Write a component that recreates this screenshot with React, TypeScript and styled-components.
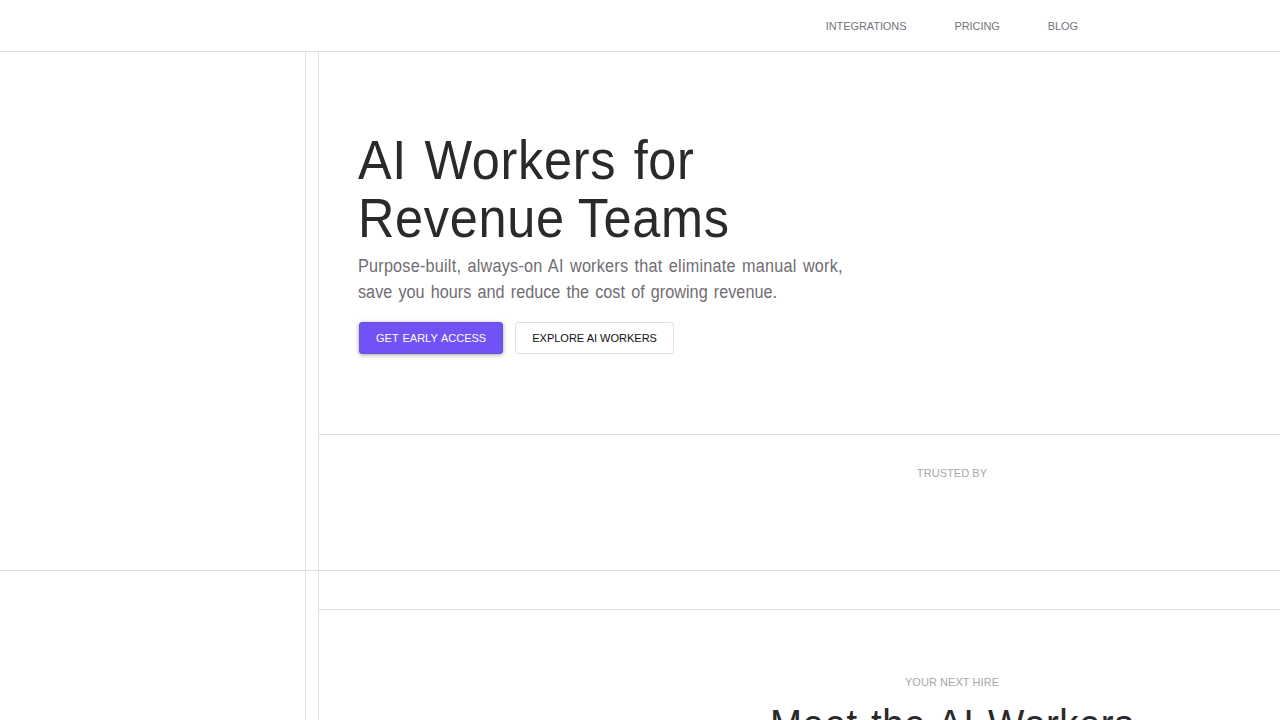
import React from "react";
import styled, { createGlobalStyle } from "styled-components";

const FONT = `"Liberation Sans", "Noto Sans CJK SC", Arial, sans-serif`;

const Global = createGlobalStyle`
  html, body { margin: 0; padding: 0; height: 720px; overflow: hidden; background: #fff; }
  body { font-family: ${FONT}; color: #262626; }
  * { box-sizing: border-box; }
`;

const Page = styled.div`
  width: 1280px;
  height: 720px;
  overflow: hidden;
  display: flex;
  flex-direction: column;
`;

const Header = styled.header`
  flex: none;
  height: 52px;
  border-bottom: 1px solid #e0e0e0;
  display: flex;
  justify-content: flex-end;
  align-items: center;
  padding: 0 202px 0 0;
  gap: 48px;
`;

const NavLink = styled.a`
  font-size: 11px;
  line-height: 16px;
  letter-spacing: -0.08px;
  color: #77727a;
  text-transform: uppercase;
`;

const Band = styled.div<{ $height: number; $ruled?: boolean }>`
  flex: none;
  height: ${(p) => p.$height}px;
  display: flex;
  border-bottom: ${(p) => (p.$ruled ? "1px solid #e0e0e0" : "none")};
`;

const Rail = styled.div`
  flex: none;
  width: 306px;
  border-right: 1px solid #e0e0e0;
`;

const Gutter = styled.div`
  flex: none;
  width: 12px;
`;

const Main = styled.main`
  flex: 1;
  min-width: 0;
  border-left: 1px solid #e0e0e0;
  display: flex;
  flex-direction: column;
`;

const Hero = styled.section`
  flex: none;
  height: 383px;
  padding: 79px 0 0 39px;
  border-bottom: 1px solid #e0e0e0;
`;

const Title = styled.h1`
  margin: 0;
  font-size: 56px;
  line-height: 58px;
  font-weight: 400;
  color: #2a2a2a;
  letter-spacing: 0.8px;
  transform: scaleX(0.9);
  transform-origin: left center;
  white-space: nowrap;
`;

const TitleLine = styled.span<{ $wordGap: number }>`
  display: block;
  word-spacing: ${(p) => p.$wordGap}px;
`;

const Lead = styled.p`
  margin: 6px 0 0;
  font-size: 18px;
  line-height: 26px;
  color: #716c73;
  transform: scaleX(0.9);
  transform-origin: left center;
  white-space: nowrap;
`;

const LeadLine = styled.span<{ $tracking: number }>`
  display: block;
  word-spacing: 1.8px;
  letter-spacing: ${(p) => p.$tracking}px;
`;

const Actions = styled.div`
  margin: 17px 0 0 1px;
  display: flex;
  gap: 12px;
`;

const Button = styled.button<{ $primary?: boolean }>`
  height: 32px;
  padding: 0 16px;
  border-radius: 3px;
  font-family: ${FONT};
  font-size: 11px;
  word-spacing: ${(p) => (p.$primary ? "1px" : "0")};
  text-transform: uppercase;
  border: 1px solid ${(p) => (p.$primary ? "#6a4fe0" : "#e0e0e0")};
  background: ${(p) => (p.$primary ? "#7052f5" : "#fff")};
  color: ${(p) => (p.$primary ? "#fff" : "#111")};
  box-shadow: ${(p) => (p.$primary ? "0 1px 4px rgba(0,0,0,.35)" : "none")};
`;

const Trusted = styled.section`
  flex: 1;
  padding: 30px 0 0 305px;
  text-align: center;
`;

const Eyebrow = styled.div`
  font-size: 11px;
  line-height: 16px;
  letter-spacing: 0.06px;
  color: #a8a8a8;
  text-transform: uppercase;
`;

const Spacer = styled.div`
  flex: none;
  height: 39px;
  border-bottom: 1px solid #e0e0e0;
`;

const Workers = styled.section`
  flex: 1;
  padding: 64px 0 0 305px;
  text-align: center;
`;

const SectionTitle = styled.h2`
  margin: 6px 0 0;
  font-size: 42.67px;
  line-height: 56px;
  font-weight: 400;
  color: #2a2a2a;
  word-spacing: 2.4px;
  letter-spacing: 0.6px;
  transform: scaleX(0.9);
  white-space: nowrap;
`;

export default function App() {
  return (
    <Page>
      <Global />
      <Header>
        <NavLink>Integrations</NavLink>
        <NavLink>Pricing</NavLink>
        <NavLink>Blog</NavLink>
      </Header>
      <Band $height={519} $ruled>
        <Rail />
        <Gutter />
        <Main>
          <Hero>
            <Title>
              <TitleLine $wordGap={3}>AI Workers for</TitleLine>
              <TitleLine $wordGap={-1}>Revenue Teams</TitleLine>
            </Title>
            <Lead>
              <LeadLine $tracking={0.25}>Purpose-built, always-on AI workers that eliminate manual work,</LeadLine>
              <LeadLine $tracking={0.02}>save you hours and reduce the cost of growing revenue.</LeadLine>
            </Lead>
            <Actions>
              <Button $primary>Get early access</Button>
              <Button>Explore AI workers</Button>
            </Actions>
          </Hero>
          <Trusted>
            <Eyebrow>Trusted by</Eyebrow>
          </Trusted>
        </Main>
      </Band>
      <Band $height={149}>
        <Rail />
        <Gutter />
        <Main>
          <Spacer />
          <Workers>
            <Eyebrow>Your next hire</Eyebrow>
            <SectionTitle>Meet the AI Workers</SectionTitle>
          </Workers>
        </Main>
      </Band>
    </Page>
  );
}
